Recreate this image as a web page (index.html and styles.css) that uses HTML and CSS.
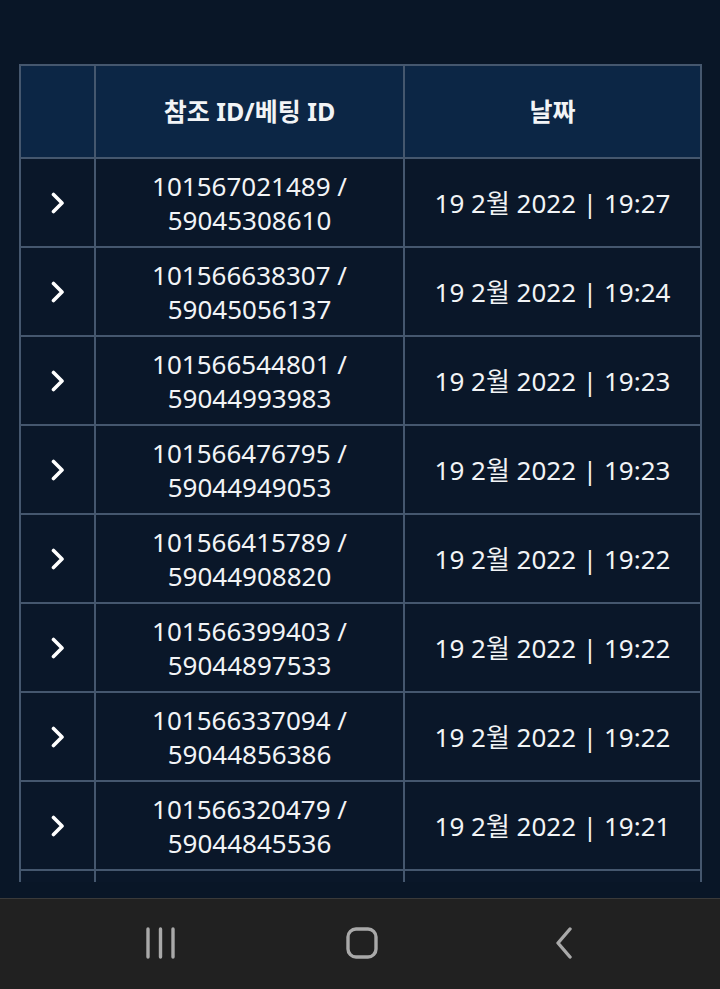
FILE: index.html
```html
<!DOCTYPE html>
<html lang="ko">
<head>
    <meta charset="UTF-8">
    <meta name="viewport" content="width=device-width, initial-scale=1.0">
    <title>베팅 내역</title>
    <link rel="stylesheet" href="styles.css">
</head>
<body>

    <div class="page">
        <div class="scroll">
            <table class="bets">
                <colgroup>
                    <col class="col-arrow">
                    <col class="col-id">
                    <col class="col-date">
                </colgroup>
                <thead>
                    <tr>
                        <th></th>
                        <th>참조 ID/베팅 ID</th>
                        <th>날짜</th>
                    </tr>
                </thead>
                <tbody>
                    <tr>
                        <td class="arrow"><svg viewBox="0 0 14 22"><path d="M2.5 2.5 L11 11 L2.5 19.5"/></svg></td>
                        <td>101567021489 /<br>59045308610</td>
                        <td>19 2월 2022 | 19:27</td>
                    </tr>
                    <tr>
                        <td class="arrow"><svg viewBox="0 0 14 22"><path d="M2.5 2.5 L11 11 L2.5 19.5"/></svg></td>
                        <td>101566638307 /<br>59045056137</td>
                        <td>19 2월 2022 | 19:24</td>
                    </tr>
                    <tr>
                        <td class="arrow"><svg viewBox="0 0 14 22"><path d="M2.5 2.5 L11 11 L2.5 19.5"/></svg></td>
                        <td>101566544801 /<br>59044993983</td>
                        <td>19 2월 2022 | 19:23</td>
                    </tr>
                    <tr>
                        <td class="arrow"><svg viewBox="0 0 14 22"><path d="M2.5 2.5 L11 11 L2.5 19.5"/></svg></td>
                        <td>101566476795 /<br>59044949053</td>
                        <td>19 2월 2022 | 19:23</td>
                    </tr>
                    <tr>
                        <td class="arrow"><svg viewBox="0 0 14 22"><path d="M2.5 2.5 L11 11 L2.5 19.5"/></svg></td>
                        <td>101566415789 /<br>59044908820</td>
                        <td>19 2월 2022 | 19:22</td>
                    </tr>
                    <tr>
                        <td class="arrow"><svg viewBox="0 0 14 22"><path d="M2.5 2.5 L11 11 L2.5 19.5"/></svg></td>
                        <td>101566399403 /<br>59044897533</td>
                        <td>19 2월 2022 | 19:22</td>
                    </tr>
                    <tr>
                        <td class="arrow"><svg viewBox="0 0 14 22"><path d="M2.5 2.5 L11 11 L2.5 19.5"/></svg></td>
                        <td>101566337094 /<br>59044856386</td>
                        <td>19 2월 2022 | 19:22</td>
                    </tr>
                    <tr>
                        <td class="arrow"><svg viewBox="0 0 14 22"><path d="M2.5 2.5 L11 11 L2.5 19.5"/></svg></td>
                        <td>101566320479 /<br>59044845536</td>
                        <td>19 2월 2022 | 19:21</td>
                    </tr>
                    <!-- next row, cut off by the scroll area -->
                    <tr>
                        <td></td>
                        <td></td>
                        <td></td>
                    </tr>
                </tbody>
            </table>
        </div>
    </div>

    <!-- Android navigation bar -->
    <nav class="navbar">
        <svg class="nav-icon" viewBox="0 0 32 32">
            <path d="M4 2 V30 M16.5 2 V30 M29 2 V30"/>
        </svg>
        <svg class="nav-icon" viewBox="0 0 32 32">
            <rect x="2" y="2" width="28" height="28" rx="8"/>
        </svg>
        <svg class="nav-icon" viewBox="0 0 32 32">
            <path d="M22 2 L10 16 L22 30"/>
        </svg>
    </nav>

</body>
</html>
```

FILE: styles.css
```css
* {
    box-sizing: border-box;
}

body {
    margin: 0;
    padding: 0;
    background-color: #091627;
    font-family: "Noto Sans", "Noto Sans CJK KR", sans-serif;
    color: #f2f4f6;
    overflow: hidden;
}

.page {
    height: 898px;
    padding: 64px 0 0 19px;
}

/* visible part of the scrolling list */
.scroll {
    width: 684px;
    height: 818px;
    overflow: hidden;
}

.bets {
    width: 681px;
    border-collapse: collapse;
    table-layout: fixed;
    background-color: #0a1729;
}

.col-arrow {
    width: 75px;
}

.col-id {
    width: 309px;
}

.col-date {
    width: 297px;
}

.bets th,
.bets td {
    border: 2px solid #45576e;
    padding: 0;
    text-align: center;
    vertical-align: middle;
}

.bets thead tr {
    height: 93px;
}

.bets th {
    background-color: #0c2645;
    font-size: 25px;
    font-weight: bold;
    padding-bottom: 4px;
}

.bets tbody tr {
    height: 89px;
}

.bets td {
    font-size: 26px;
    line-height: 34px;
}

.arrow svg {
    display: block;
    width: 14px;
    height: 22px;
    margin: 0 auto 0 30px;
    fill: none;
    stroke: #ffffff;
    stroke-width: 3.6;
    stroke-linecap: round;
    stroke-linejoin: round;
}

.navbar {
    height: 91px;
    background-color: #212121;
    border-top: 1px solid #3a3a3a;
    display: flex;
    justify-content: center;
    align-items: center;
    gap: 170px;
    padding-bottom: 2px;
    padding-left: 4px;
}

.nav-icon {
    width: 32px;
    height: 32px;
    fill: none;
    stroke: #a9a9a9;
    stroke-width: 3.4;
    stroke-linecap: round;
    stroke-linejoin: round;
}
```
